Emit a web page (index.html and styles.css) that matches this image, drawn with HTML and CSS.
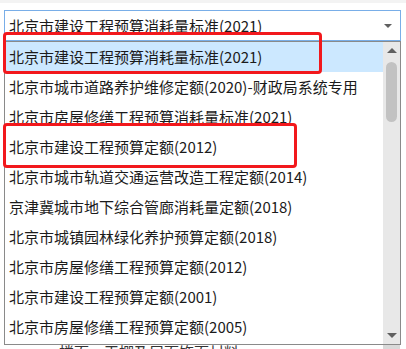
FILE: index.html
```html
<!DOCTYPE html>
<html lang="zh-CN">
<head>
  <meta charset="UTF-8">
  <title>定额库选择</title>
  <link rel="stylesheet" href="styles.css">
</head>
<body>
  <div class="topline"></div>
  <div class="page">
    <div class="combo">
      <span class="combo-text">北京市建设工程预算消耗量标准(2021)</span>
      <span class="combo-arrow"></span>
    </div>
    <div class="behind">
      <span class="behind-text">楼面、天棚及屋面饰面材料</span>
      <span class="behind-bar"></span>
    </div>

    <div class="dropdown">
      <ul class="options">
        <li class="selected">北京市建设工程预算消耗量标准(2021)</li>
        <li>北京市城市道路养护维修定额(2020)-财政局系统专用</li>
        <li>北京市房屋修缮工程预算消耗量标准(2021)</li>
        <li>北京市建设工程预算定额(2012)</li>
        <li>北京市城市轨道交通运营改造工程定额(2014)</li>
        <li>京津冀城市地下综合管廊消耗量定额(2018)</li>
        <li>北京市城镇园林绿化养护预算定额(2018)</li>
        <li>北京市房屋修缮工程预算定额(2012)</li>
        <li>北京市建设工程预算定额(2001)</li>
        <li>北京市房屋修缮工程预算定额(2005)</li>
      </ul>
      <div class="scrollbar">
        <span class="arrow-up"></span>
        <span class="thumb"></span>
        <span class="arrow-down"></span>
      </div>
    </div>

    <!-- 标注框 -->
    <div class="mark mark1"></div>
    <div class="mark mark2"></div>
  </div>
</body>
</html>
```

FILE: styles.css
```css
body{
  margin:0;
  background:#fff;
  font-family:"Noto Sans CJK SC","Microsoft YaHei",sans-serif;
  font-size:15px;
  color:#1b1b1b;
}
.topline{
  height:3px;
  background:#f3f3f3;
}
.page{
  position:relative;
  height:346px;
  overflow:hidden;
  padding:7px 5px 0 4px;
}
.combo{
  height:29px;
  border:1px solid #79aee8;
  display:flex;
  align-items:center;
  justify-content:space-between;
  padding:0 8px 0 4px;
}
.combo-text{
  line-height:29px;
}
.combo-arrow{
  width:0;
  height:0;
  border-left:4px solid transparent;
  border-right:4px solid transparent;
  border-top:4px solid #606060;
}
.behind{
  position:relative;
  height:320px;
}
.behind-text{
  position:absolute;
  left:55px;
  top:300px;
  color:#333;
}
.behind-bar{
  position:absolute;
  left:379px;
  top:280px;
  width:17px;
  height:60px;
  background:#d9d9d9;
}
.dropdown{
  position:absolute;
  left:4px;
  top:38px;
  width:395px;
  height:302px;
  border:1px solid #8a8a8a;
  background:#fff;
  display:flex;
}
.options{
  flex:1;
  list-style:none;
  margin:0;
  padding:0;
}
.options li{
  height:30px;
  line-height:30px;
  padding-left:4px;
  white-space:nowrap;
}
.options li.selected{
  background:#cce8ff;
}
.scrollbar{
  width:17px;
  background:#e8e8e8;
  position:relative;
}
.arrow-up,.arrow-down{
  position:absolute;
  left:4px;
  width:0;
  height:0;
  border-left:5px solid transparent;
  border-right:5px solid transparent;
}
.arrow-up{
  top:6px;
  border-bottom:5px solid #606060;
}
.arrow-down{
  bottom:6px;
  border-top:5px solid #606060;
}
.thumb{
  position:absolute;
  left:3px;
  top:20px;
  width:11px;
  height:60px;
  border-radius:6px;
  background:#c2c2c2;
}
.mark{
  position:absolute;
  border:3px solid #f2181c;
  border-radius:4px;
}
.mark1{
  left:3px;
  top:29px;
  width:313px;
  height:36px;
}
.mark2{
  left:3px;
  top:120px;
  width:288px;
  height:39px;
}
```
